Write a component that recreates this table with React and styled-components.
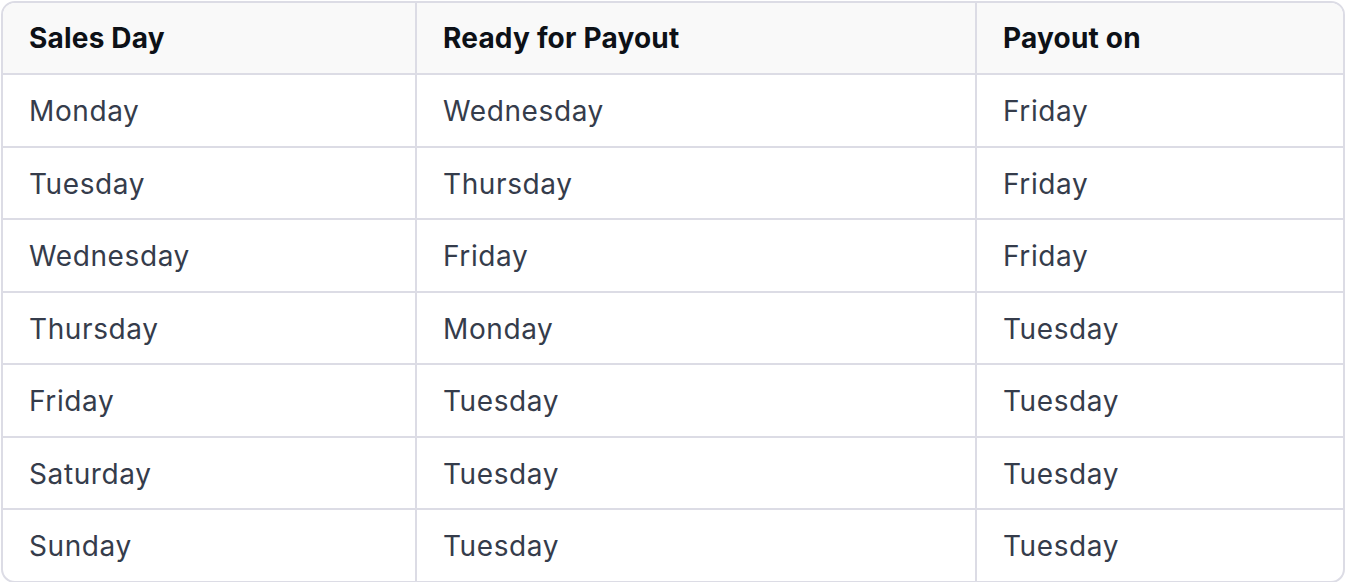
import React from 'react';
import styled, { createGlobalStyle } from 'styled-components';

const GlobalStyle = createGlobalStyle`
  body {
    margin: 0;
    background: #ffffff;
    font-family: Inter, "Noto Sans", sans-serif;
  }
`;

const rows = [
  ['Monday', 'Wednesday', 'Friday'],
  ['Tuesday', 'Thursday', 'Friday'],
  ['Wednesday', 'Friday', 'Friday'],
  ['Thursday', 'Monday', 'Tuesday'],
  ['Friday', 'Tuesday', 'Tuesday'],
  ['Saturday', 'Tuesday', 'Tuesday'],
  ['Sunday', 'Tuesday', 'Tuesday'],
];

const Wrapper = styled.div`
  padding: 1px 0 0 1px;
`;

const Table = styled.table`
  width: 1344px;
  border-collapse: separate;
  border-spacing: 0;
  border: 2px solid #dcdce5;
  border-radius: 14px;
  overflow: hidden;
  table-layout: fixed;
`;

const Th = styled.th`
  height: 70px;
  padding: 0 26px;
  text-align: left;
  font-size: 28px;
  font-weight: 700;
  letter-spacing: 0.2px;
  color: #0d1117;
  background: #f9f9f9;
  border-bottom: 2px solid #dcdce5;
  border-left: ${(p) => (p.first ? 'none' : '2px solid #dcdce5')};
`;

const Td = styled.td`
  box-sizing: border-box;
  height: ${(p) => (p.last ? '70.5px' : '72.5px')};
  padding: 2px 26px 0;
  font-size: 28px;
  font-weight: 400;
  letter-spacing: 0.6px;
  color: #353c4b;
  border-bottom: ${(p) => (p.last ? 'none' : '2px solid #dcdce5')};
  border-left: ${(p) => (p.first ? 'none' : '2px solid #dcdce5')};
`;

const App = () => {
  return (
    <Wrapper>
      <GlobalStyle />
      <Table>
        <colgroup>
          <col style={{ width: 412 }} />
          <col style={{ width: 560 }} />
          <col />
        </colgroup>
        <thead>
          <tr>
            <Th first>Sales Day</Th>
            <Th>Ready for Payout</Th>
            <Th>Payout on</Th>
          </tr>
        </thead>
        <tbody>
          {rows.map((r, i) => (
            <tr key={i}>
              {r.map((c, j) => (
                <Td key={j} first={j === 0} last={i === rows.length - 1}>
                  {c}
                </Td>
              ))}
            </tr>
          ))}
        </tbody>
      </Table>
    </Wrapper>
  );
};

export default App;
